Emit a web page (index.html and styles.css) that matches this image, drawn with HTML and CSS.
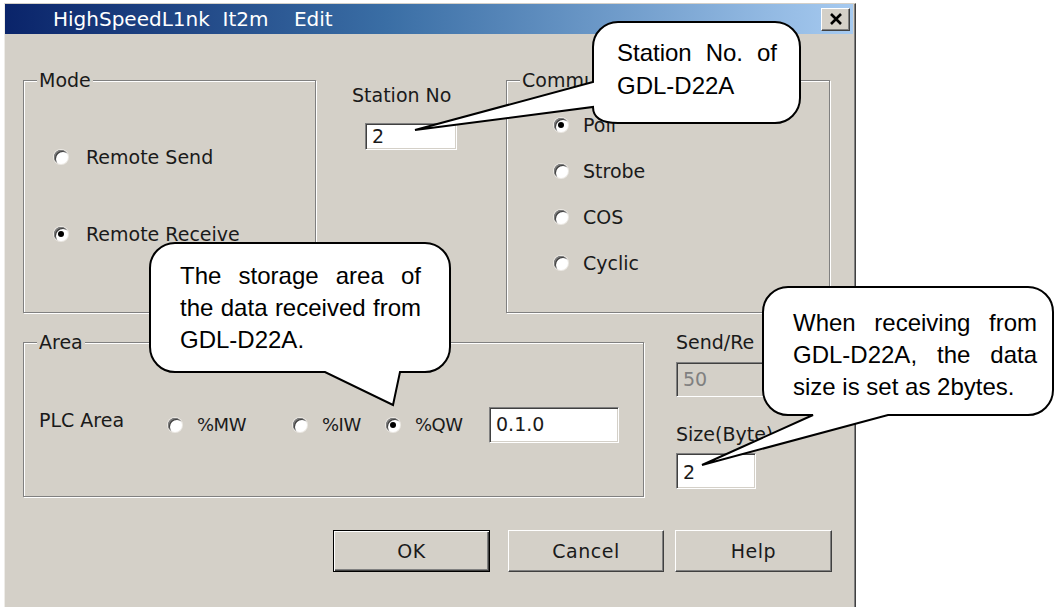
FILE: index.html
```html
<!DOCTYPE html>
<html lang="en">
<head>
    <meta charset="utf-8">
    <title>HighSpeedL1nk It2m Edit</title>
    <link rel="stylesheet" href="styles.css">
</head>
<body>
<div class="page">
    <div class="window">
        <div class="titlebar">
            <span class="title">HighSpeedL1nk&nbsp;&nbsp;It2m&nbsp;&nbsp;&nbsp;&nbsp;Edit</span>
            <span class="close">
                <svg width="14" height="12" viewBox="0 0 14 12"><path d="M2 1 L12 11 M12 1 L2 11" stroke="#000" stroke-width="2.6" fill="none"/></svg>
            </span>
        </div>
        <div class="dlg-body">
            <div class="row-top">
                <div class="group group-mode">
                    <div class="group-title">Mode</div>
                    <div class="opt mode-opt"><span class="radio"></span>Remote Send</div>
                    <div class="opt mode-opt"><span class="radio on"></span>Remote Receive</div>
                </div>
                <div class="station">
                    <div class="lbl">Station No</div>
                    <div class="field station-field">2</div>
                </div>
                <div class="group group-comm">
                    <div class="group-title">Commu</div>
                    <div class="opt comm-opt"><span class="radio on"></span>Poll</div>
                    <div class="opt comm-opt"><span class="radio"></span>Strobe</div>
                    <div class="opt comm-opt"><span class="radio"></span>COS</div>
                    <div class="opt comm-opt"><span class="radio"></span>Cyclic</div>
                </div>
            </div>
            <div class="row-mid">
                <div class="group group-area">
                    <div class="group-title">Area</div>
                    <div class="plc-row">
                        <span class="plc-label">PLC Area</span>
                        <span class="plc-opt opt-mw"><span class="radio"></span>%MW</span>
                        <span class="plc-opt opt-iw"><span class="radio"></span>%IW</span>
                        <span class="plc-opt opt-qw"><span class="radio on"></span>%QW</span>
                        <span class="field plc-field">0.1.0</span>
                    </div>
                </div>
                <div class="side">
                    <div class="lbl send-lbl">Send/Re</div>
                    <div class="field field-off send-field">50</div>
                    <div class="lbl size-lbl">Size(Byte)</div>
                    <div class="field size-field">2</div>
                </div>
            </div>
            <div class="buttons">
                <div class="btn btn-default">OK</div>
                <div class="btn btn-cancel">Cancel</div>
                <div class="btn btn-help">Help</div>
            </div>
        </div>
    </div>

    <!-- callouts drawn over the dialog -->
    <svg class="callouts" width="1055" height="607" viewBox="0 0 1055 607">
        <path d="M618 22 L775 22 A25 25 0 0 1 800 47 L800 98 A25 25 0 0 1 775 123 L618 123 Q593 123 593 107 L415 130 L593 82 L593 47 A25 25 0 0 1 618 22 Z"/>
        <path d="M175 243 L425 243 A25 25 0 0 1 450 268 L450 347 A25 25 0 0 1 425 372 L400 372 L393 405 L325 372 L175 372 A25 25 0 0 1 150 347 L150 268 A25 25 0 0 1 175 243 Z"/>
        <path d="M788 287 L1028 287 A25 25 0 0 1 1053 312 L1053 390 A25 25 0 0 1 1028 415 L888 415 L702 465 L813 415 L788 415 A25 25 0 0 1 763 390 L763 312 A25 25 0 0 1 788 287 Z"/>
    </svg>
    <div class="note note-station">
        <div class="jl">Station No. of</div>
        <div>GDL-D22A</div>
    </div>
    <div class="note note-area">
        <div class="jl">The storage area of</div>
        <div class="jl">the data received from</div>
        <div>GDL-D22A.</div>
    </div>
    <div class="note note-size">
        <div class="jl">When receiving from</div>
        <div class="jl">GDL-D22A, the data</div>
        <div>size is set as 2bytes.</div>
    </div>
</div>
</body>
</html>
```

FILE: styles.css
```css
body {
    margin: 0;
    padding: 0;
    background: #fff;
}

.page {
    position: relative;
    width: 1055px;
    height: 607px;
    overflow: hidden;
    font-family: "DejaVu Sans", sans-serif;
    font-size: 19px;
    line-height: 22px;
    color: #1a1a1a;
}

/* window frame */
.window {
    margin: 3px 0 0 4px;
    width: 850px;
    height: 604px;
    background: #d4d0c8;
    border-top: 1px solid #d4d0c8;
    border-left: 1px solid #eeece8;
    border-right: 1px solid #404040;
    box-shadow: inset -1px 0 0 #808080;
    box-sizing: content-box;
}

.titlebar {
    height: 30px;
    margin-right: 2px;
    display: flex;
    align-items: center;
    justify-content: space-between;
    background: linear-gradient(to right, #0a246a, #3a6ea5 45%, #a6caf0);
}
.title {
    padding-left: 48px;
    color: #fff;
    font-size: 20px;
    line-height: 28px;
}
.close {
    width: 29px;
    height: 23px;
    margin-right: 3px;
    box-sizing: border-box;
    display: flex;
    align-items: center;
    justify-content: center;
    background: #d4d0c8;
    border: 1px solid;
    border-color: #fff #404040 #404040 #fff;
    box-shadow: inset -1px -1px 0 #808080;
}

.dlg-body {
    padding: 46px 0 0 18px;
}

/* etched group boxes */
.group {
    box-sizing: border-box;
    border: 1px solid #808080;
    box-shadow: 1px 1px 0 #fff, inset 1px 1px 0 #fff;
}
.group-title {
    display: table;
    margin: -12px 0 0 13px;
    padding: 0 2px;
    background: #d4d0c8;
    white-space: nowrap;
}

.opt {
    display: flex;
    align-items: center;
}

.radio {
    position: relative;
    flex: none;
    width: 14px;
    height: 14px;
    border-radius: 50%;
    background: #fff;
    box-shadow: inset 1px 1px 0 #808080, inset 2px 2px 0 #404040, 0 0 0 1px #ece9e4;
}
.radio.on::after {
    content: "";
    position: absolute;
    left: 4px;
    top: 4px;
    width: 6px;
    height: 6px;
    border-radius: 50%;
    background: #000;
}

.field {
    box-sizing: border-box;
    background: #fff;
    border: 1px solid;
    border-color: #808080 #fff #fff #808080;
    box-shadow: inset 1px 1px 0 #404040, inset -1px -1px 0 #d4d0c8;
    padding-left: 6px;
}
.field-off {
    background: #d4d0c8;
    color: #808080;
}

/* top row */
.row-top {
    display: flex;
    align-items: flex-start;
}
.group-mode {
    width: 293px;
    height: 233px;
}
.mode-opt {
    margin-top: 55px;
    padding-left: 30px;
    gap: 18px;
}
.station {
    width: 154px;
    margin-left: 36px;
    padding-top: 4px;
}
.station-field {
    width: 92px;
    height: 27px;
    margin: 17px 0 0 13px;
    line-height: 24px;
}
.group-comm {
    width: 324px;
    height: 233px;
}
.comm-opt {
    margin-top: 24px;
    padding-left: 47px;
    gap: 15px;
}
.group-comm .group-title + .comm-opt {
    margin-top: 23px;
}

/* middle row */
.row-mid {
    display: flex;
    align-items: flex-start;
    margin-top: 18px;
}
.group-area {
    width: 621px;
    height: 155px;
    margin-top: 11px;
}
.plc-row {
    display: flex;
    align-items: center;
    margin-top: 54px;
    padding-left: 15px;
}
.plc-label {
    width: 129px;
    margin-bottom: 10px;
}
.plc-opt {
    display: flex;
    align-items: center;
    gap: 15px;
    font-size: 18px;
    letter-spacing: -0.5px;
}
.opt-mw { width: 125px; }
.opt-iw { width: 93px; }
.opt-qw { width: 103px; }
.plc-field {
    width: 130px;
    height: 36px;
    line-height: 33px;
}
.side {
    margin-left: 32px;
}
.send-lbl {
    white-space: nowrap;
}
.send-field {
    width: 100px;
    height: 35px;
    margin-top: 9px;
    line-height: 32px;
}
.size-lbl {
    margin-top: 26px;
    white-space: nowrap;
}
.size-field {
    width: 80px;
    height: 36px;
    margin-top: 8px;
    line-height: 36px;
}

/* buttons */
.buttons {
    display: flex;
    margin-top: 33px;
    padding-left: 310px;
}
.btn {
    box-sizing: border-box;
    height: 42px;
    display: flex;
    align-items: center;
    justify-content: center;
    background: #d4d0c8;
    border: 1px solid;
    border-color: #fff #404040 #404040 #fff;
    box-shadow: inset -1px -1px 0 #808080;
    letter-spacing: 0.5px;
}
.btn-default {
    width: 157px;
    border-color: #000;
    box-shadow: inset 1px 1px 0 #fff, inset -1px -1px 0 #404040, inset -2px -2px 0 #808080;
}
.btn-cancel {
    width: 156px;
    margin-left: 18px;
}
.btn-help {
    width: 157px;
    margin-left: 11px;
}

/* callouts */
.callouts {
    position: absolute;
    left: 0;
    top: 0;
}
.callouts path {
    fill: #fff;
    stroke: #000;
    stroke-width: 2;
    stroke-linejoin: miter;
}
.note {
    position: absolute;
    font-family: "Liberation Sans", Arial, sans-serif;
    font-size: 24px;
    line-height: 32px;
    white-space: nowrap;
    color: #000;
}
.note .jl {
    text-align: justify;
    text-align-last: justify;
}
.note-station {
    left: 617px;
    top: 36px;
    width: 160px;
    line-height: 33px;
}
.note-area {
    left: 180px;
    top: 260px;
    width: 241px;
}
.note-size {
    left: 793px;
    top: 307px;
    width: 244px;
}
```
